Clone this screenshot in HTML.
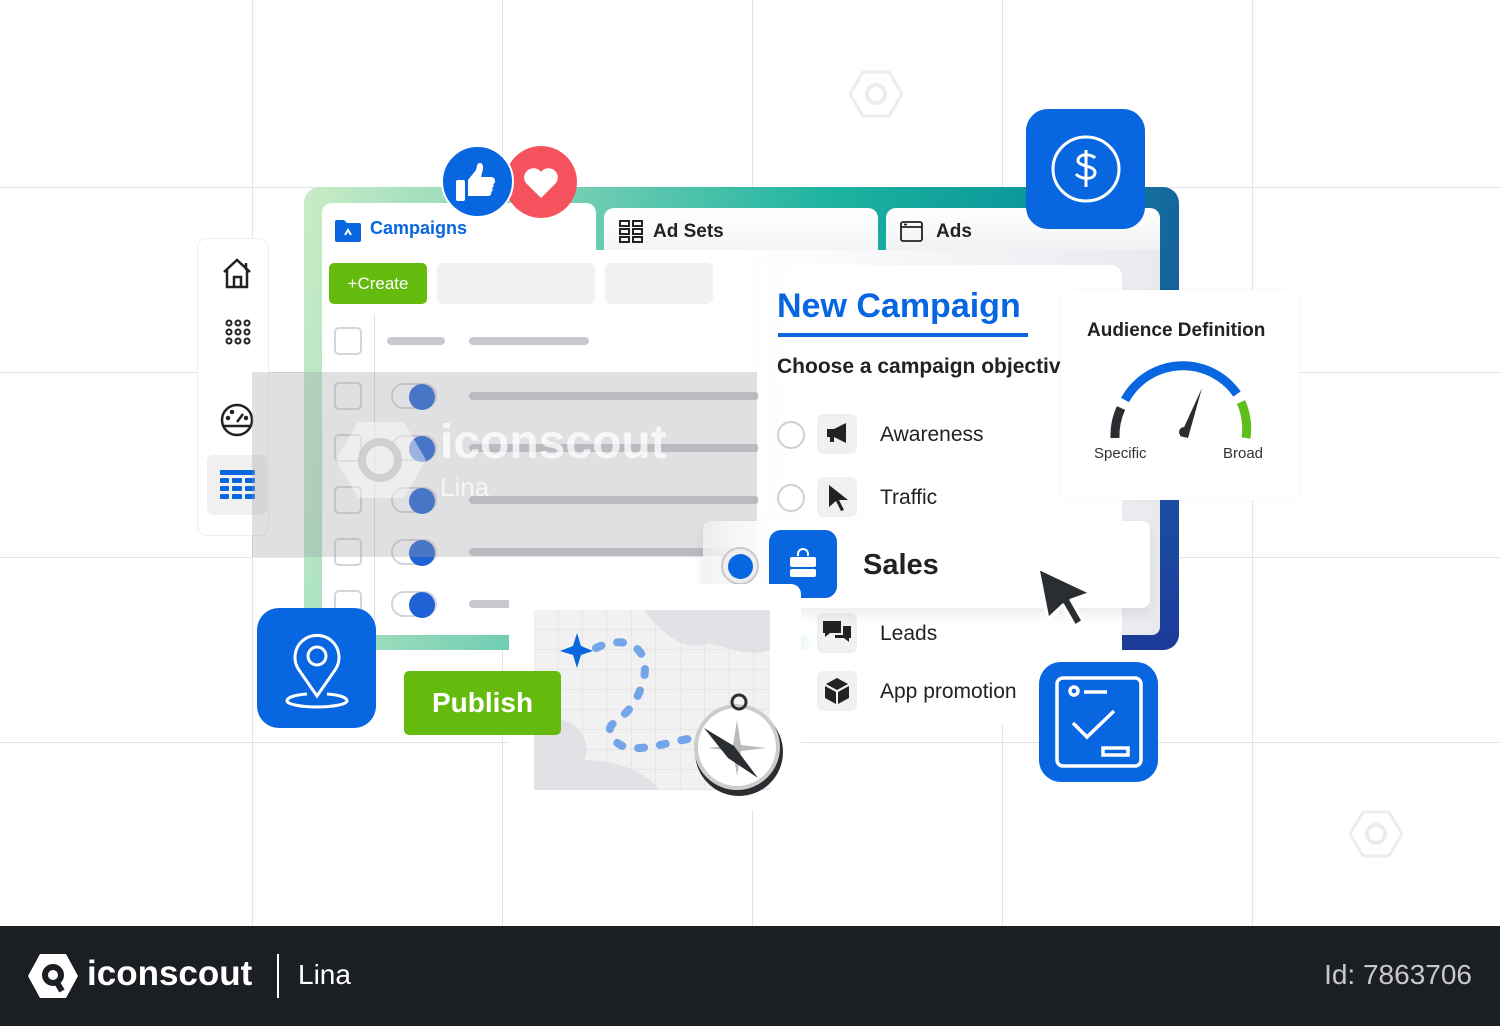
<!DOCTYPE html>
<html><head><meta charset="utf-8"><style>
*{margin:0;padding:0;box-sizing:border-box}
body{width:1500px;height:1026px;position:relative;overflow:hidden;background:#fff;font-family:"Liberation Sans",sans-serif}
.a{position:absolute}
.vl{position:absolute;top:0;width:1px;height:926px;background:#e3e3ea}
.hl{position:absolute;left:0;height:1px;width:1500px;background:#e3e3ea}
.cb{position:absolute;left:334px;width:28px;height:28px;border:2px solid #d4d4d9;border-radius:5px;background:#fff}
.tg{position:absolute;left:391px;width:46px;height:26px;border:2px solid #d4d4d9;border-radius:13px;background:#fff}
.tg:after{content:"";position:absolute;right:0;top:-1px;width:26px;height:26px;border-radius:50%;background:#1f62d6}
.bar{position:absolute;height:8px;border-radius:4px;background:#c8c9cf}
.rad{position:absolute;left:777px;width:28px;height:28px;border:2px solid #d0d0d4;border-radius:50%;background:#fff}
.ib{position:absolute;left:817px;width:40px;height:40px;border-radius:6px;background:#f0f0f2}
.lbl{position:absolute;left:880px;font-size:21px;color:#222}
.big{position:absolute;background:#0866e0;border-radius:22px}
</style></head><body>
<div class="vl" style="left:252px"></div><div class="vl" style="left:502px"></div><div class="vl" style="left:752px"></div><div class="vl" style="left:1002px"></div><div class="vl" style="left:1252px"></div>
<div class="hl" style="top:187px"></div><div class="hl" style="top:372px"></div><div class="hl" style="top:557px"></div><div class="hl" style="top:742px"></div>

<!-- sidebar -->
<div class="a" style="left:197px;top:238px;width:72px;height:298px;background:#fff;border:1px solid #eee;border-radius:10px"></div>
<svg class="a" style="left:220px;top:255px" width="36" height="36" viewBox="0 0 36 36" fill="none" stroke="#222" stroke-width="2.5"><path d="M4 17L17 5l13 12M7 14v18h20V14M14 32V22h7v10M26 8v7"/></svg>
<svg class="a" style="left:224px;top:318px" width="28" height="28" viewBox="0 0 28 28" fill="none" stroke="#222" stroke-width="2"><circle cx="5" cy="5" r="2.5"/><circle cx="14" cy="5" r="2.5"/><circle cx="23" cy="5" r="2.5"/><circle cx="5" cy="14" r="2.5"/><circle cx="14" cy="14" r="2.5"/><circle cx="23" cy="14" r="2.5"/><circle cx="5" cy="23" r="2.5"/><circle cx="14" cy="23" r="2.5"/><circle cx="23" cy="23" r="2.5"/></svg>
<svg class="a" style="left:219px;top:402px" width="36" height="36" viewBox="0 0 36 36" fill="none" stroke="#222" stroke-width="2.5"><circle cx="18" cy="18" r="15"/><path d="M5 24h26M18 20l6-8"/><circle cx="9" cy="16" r="1" fill="#222"/><circle cx="13" cy="10" r="1" fill="#222"/><circle cx="27" cy="16" r="1" fill="#222"/></svg>
<div class="a" style="left:207px;top:455px;width:60px;height:60px;background:#f0f0f0;border-radius:6px"></div>
<svg class="a" style="left:220px;top:470px" width="35" height="30" viewBox="0 0 35 30" fill="#0866e0"><rect x="0" y="0" width="35" height="5" rx="1"/><rect x="0" y="8" width="9" height="5" rx="1"/><rect x="12" y="8" width="10" height="5" rx="1"/><rect x="25" y="8" width="10" height="5" rx="1"/><rect x="0" y="16" width="9" height="5" rx="1"/><rect x="12" y="16" width="10" height="5" rx="1"/><rect x="25" y="16" width="10" height="5" rx="1"/><rect x="0" y="24" width="9" height="5" rx="1"/><rect x="12" y="24" width="10" height="5" rx="1"/><rect x="25" y="24" width="10" height="5" rx="1"/></svg>

<!-- frame -->
<div class="a" style="left:304px;top:187px;width:875px;height:463px;border-radius:16px;background:linear-gradient(100deg,#c9ecc6 0%,#80d2b6 25%,#1db3a0 55%,#0b9a9a 75%,#1a4aa0 100%)"></div>
<div class="a" style="left:1100px;top:400px;width:79px;height:250px;border-radius:0 0 16px 0;background:linear-gradient(#1a5aa8,#1c3b99)"></div>
<div class="a" style="left:322px;top:250px;width:838px;height:385px;background:linear-gradient(90deg,#fff 0%,#fff 50%,#e8eaee 100%);border-radius:0 0 8px 8px"></div>
<div class="a" style="left:322px;top:203px;width:274px;height:60px;background:#fff;border-radius:10px 10px 0 0"></div>
<div class="a" style="left:604px;top:208px;width:274px;height:42px;background:linear-gradient(#fff,#f4f5f7);border-radius:10px 10px 0 0"></div>
<div class="a" style="left:886px;top:208px;width:274px;height:42px;background:linear-gradient(#fff,#f0f1f3);border-radius:10px 10px 0 0"></div>
<svg class="a" style="left:334px;top:218px" width="28" height="24" viewBox="0 0 28 24"><path d="M1 4a2 2 0 012-2h7l3 3h12a2 2 0 012 2v15a2 2 0 01-2 2H3a2 2 0 01-2-2z" fill="#0866e0"/><path d="M11 17l3-5 3 5" stroke="#fff" stroke-width="2" fill="none"/></svg>
<div class="a" style="left:370px;top:218px;font-size:18px;font-weight:bold;color:#0866e0">Campaigns</div>
<svg class="a" style="left:619px;top:220px" width="24" height="24" viewBox="0 0 24 24" fill="none" stroke="#222" stroke-width="2"><rect x="1" y="1" width="9" height="5"/><rect x="14" y="1" width="9" height="5"/><rect x="1" y="9" width="9" height="5"/><rect x="14" y="9" width="9" height="5"/><rect x="1" y="17" width="9" height="5"/><rect x="14" y="17" width="9" height="5"/></svg>
<div class="a" style="left:653px;top:221px;font-size:19px;font-weight:bold;color:#222">Ad Sets</div>
<svg class="a" style="left:900px;top:221px" width="23" height="21" viewBox="0 0 23 21" fill="none" stroke="#222" stroke-width="1.8"><rect x="1" y="1" width="21" height="19" rx="2"/><path d="M1 6h21M4 3.5h3"/></svg>
<div class="a" style="left:936px;top:221px;font-size:19px;font-weight:bold;color:#222">Ads</div>

<div class="a" style="left:329px;top:263px;width:98px;height:41px;background:#64bb0e;border-radius:5px;color:#fff;font-size:17px;text-align:center;line-height:41px">+Create</div>
<div class="a" style="left:437px;top:263px;width:158px;height:41px;background:#f1f1f2;border-radius:6px"></div>
<div class="a" style="left:605px;top:263px;width:108px;height:41px;background:#f1f1f2;border-radius:6px"></div>
<div class="a" style="left:374px;top:315px;width:1px;height:320px;background:#ddd"></div>
<div class="cb" style="top:327px"></div><div class="bar" style="left:387px;top:337px;width:58px"></div><div class="bar" style="left:469px;top:337px;width:120px"></div>
<div class="cb" style="top:382px"></div><div class="tg" style="top:383px"></div><div class="bar" style="left:469px;top:392px;width:290px"></div>
<div class="cb" style="top:434px"></div><div class="tg" style="top:435px"></div><div class="bar" style="left:469px;top:444px;width:290px"></div>
<div class="cb" style="top:486px"></div><div class="tg" style="top:487px"></div><div class="bar" style="left:469px;top:496px;width:290px"></div>
<div class="cb" style="top:538px"></div><div class="tg" style="top:539px"></div><div class="bar" style="left:469px;top:548px;width:290px"></div>
<div class="cb" style="top:590px"></div><div class="tg" style="top:591px"></div><div class="bar" style="left:469px;top:600px;width:60px"></div>

<!-- watermark overlay -->
<div class="a" style="left:252px;top:372px;width:505px;height:185px;background:rgba(160,160,165,0.32)"></div>
<div class="a" style="left:440px;top:415px;font-size:48px;color:rgba(255,255,255,0.75);font-weight:bold">iconscout</div>
<div class="a" style="left:440px;top:472px;font-size:26px;color:rgba(255,255,255,0.7)">Lina</div>
<svg class="a" style="left:336px;top:420px" width="90" height="80" viewBox="0 0 90 80"><path d="M22 2h46l22 38-22 38H22L0 40z" fill="rgba(255,255,255,0.45)"/><circle cx="44" cy="40" r="18" fill="none" stroke="rgba(200,200,200,0.8)" stroke-width="8"/></svg>

<!-- New campaign card -->
<div class="a" style="left:758px;top:265px;width:364px;height:460px;background:linear-gradient(90deg,rgba(255,255,255,0.6),#fff 15%);border-radius:12px"></div>
<div class="a" style="left:777px;top:287px;font-size:34px;font-weight:bold;color:#0866e0">New Campaign</div>
<div class="a" style="left:778px;top:333px;width:250px;height:4px;background:#0866e0"></div>
<div class="a" style="left:777px;top:355px;font-size:21px;font-weight:bold;color:#222;width:285px;overflow:hidden;white-space:nowrap">Choose a campaign objective</div>
<div class="rad" style="top:421px"></div><div class="ib" style="top:414px"></div>
<svg class="a" style="left:825px;top:422px" width="26" height="24" viewBox="0 0 26 24" fill="#222"><path d="M2 7h7l12-6v20l-12-6H2z"/><rect x="5" y="15" width="4" height="5"/></svg>
<div class="lbl" style="top:423px">Awareness</div>
<div class="rad" style="top:484px"></div><div class="ib" style="top:477px"></div>
<svg class="a" style="left:828px;top:484px" width="22" height="28" viewBox="0 0 22 28" fill="#222"><path d="M1 1l19 15h-9l5 10-3 1-5-10-7 6z"/></svg>
<div class="lbl" style="top:486px">Traffic</div>
<div class="ib" style="top:613px"></div>
<svg class="a" style="left:822px;top:619px" width="30" height="28" viewBox="0 0 30 28" fill="#222"><path d="M1 2h18v12H8l-5 4v-4H1z"/><path d="M21 7h8v12h-2v4l-5-4h-9v-3h8z"/></svg>
<div class="lbl" style="top:622px">Leads</div>
<div class="ib" style="top:671px"></div>
<svg class="a" style="left:824px;top:677px" width="26" height="28" viewBox="0 0 26 28" fill="#222"><path d="M13 1l11 6-11 6L2 7z"/><path d="M1 9l11 6v12L1 21z"/><path d="M25 9l-11 6v12l11-6z"/></svg>
<div class="lbl" style="top:680px">App promotion</div>

<!-- audience -->
<div class="a" style="left:1061px;top:290px;width:238px;height:210px;background:#fff;border-radius:10px;box-shadow:0 0 6px rgba(0,0,0,0.04)"></div>
<div class="a" style="left:1087px;top:320px;font-size:19px;font-weight:bold;color:#222">Audience Definition</div>
<svg class="a" style="left:1100px;top:360px" width="160" height="82" viewBox="0 0 160 82" fill="none" stroke-width="9"><path d="M15 78a66 66 0 0 1 6-30" stroke="#2a2d31"/><path d="M25 40a66 66 0 0 1 112 -6" stroke="#0866e0"/><path d="M141 42a66 66 0 0 1 5 36" stroke="#5fbf1a"/><path d="M80 76l22-48-14 50z" fill="#2a2d31" stroke="none"/><circle cx="84" cy="72" r="5" fill="#2a2d31" stroke="none"/></svg>
<div class="a" style="left:1094px;top:445px;font-size:15px;color:#333">Specific</div>
<div class="a" style="left:1223px;top:445px;font-size:15px;color:#333">Broad</div>

<!-- sales -->
<div class="a" style="left:703px;top:521px;width:447px;height:87px;background:linear-gradient(90deg,rgba(240,240,242,0.8),#fff 15%);border-radius:8px;box-shadow:0 6px 14px rgba(0,0,0,0.08)"></div>
<div class="a" style="left:721px;top:547px;width:38px;height:38px;border-radius:50%;border:2px solid #c9c9cc;background:#eee"></div>
<div class="a" style="left:728px;top:554px;width:25px;height:25px;border-radius:50%;background:#0866e0"></div>
<div class="a" style="left:769px;top:530px;width:68px;height:68px;border-radius:12px;background:#0866e0"></div>
<svg class="a" style="left:788px;top:548px" width="30" height="30" viewBox="0 0 30 30" fill="#fff"><path d="M9 8V6a6 6 0 0 1 12 0v2h-2V6a4 4 0 0 0-8 0v2z"/><rect x="2" y="9" width="26" height="10" rx="2"/><rect x="2" y="21" width="26" height="8" rx="2"/></svg>
<div class="a" style="left:863px;top:549px;font-size:29px;font-weight:bold;color:#222">Sales</div>
<svg class="a" style="left:1032px;top:562px" width="68" height="68" viewBox="0 0 68 68"><path d="M6 6l53 25-20 7 12 21-8 5-12-21-15 14z" fill="#2a2d31" stroke="#fff" stroke-width="3" stroke-linejoin="round"/></svg>

<!-- map card -->
<div class="a" style="left:509px;top:584px;width:292px;height:226px;background:#fff;border-radius:10px"></div>
<svg class="a" style="left:534px;top:610px" width="250" height="188" viewBox="0 0 250 188">
<defs><pattern id="g" width="24.4" height="20" patternUnits="userSpaceOnUse"><path d="M24.4 0V20H0" fill="none" stroke="#dcdce0" stroke-width="1"/></pattern></defs>
<rect x="0" y="0" width="236" height="180" fill="#f1f1f2"/>
<path d="M110 0h126v40c-30 10-50-10-70-5s-40-15-56-35z" fill="#e2e2e6"/>
<path d="M0 110c40-10 60 20 50 40 30 0 60 10 75 30H0z" fill="#e2e2e6"/>
<rect x="0" y="0" width="236" height="180" fill="url(#g)"/>
<path d="M43 23l4 13 12 5-12 4-4 13-4-13-13-4 13-5z" fill="#0866e0"/>
<path d="M62 38c30-15 60 0 45 40s-40 30-28 50 50 5 80 0" fill="none" stroke="#74a5ea" stroke-width="8" stroke-linecap="round" stroke-dasharray="6 16"/>
<circle cx="205" cy="142" r="44" fill="#2a2d31"/>
<circle cx="203" cy="137" r="41" fill="#fff" stroke="#ccc" stroke-width="4"/>
<circle cx="205" cy="92" r="7" fill="none" stroke="#2a2d31" stroke-width="3"/>
<path d="M203 110l4 25 25 3-25 3-4 25-4-25-25-3 25-3z" fill="#bbb"/>
<path d="M170 118l30 18 24 32-30-20z" fill="#2a2d31"/>
</svg>

<!-- publish -->
<div class="a" style="left:404px;top:671px;width:157px;height:64px;background:#64bb0e;border-radius:5px;color:#fff;font-size:28px;font-weight:bold;text-align:center;line-height:64px">Publish</div>

<!-- big icons -->
<div class="big" style="left:257px;top:608px;width:119px;height:120px"></div>
<svg class="a" style="left:285px;top:628px" width="64" height="82" viewBox="0 0 64 82" fill="none" stroke="#fff" stroke-width="3"><path d="M32 68L14 42a22 22 0 1 1 36 0z"/><circle cx="32" cy="28" r="9"/><path d="M22 66C8 67 2 70 2 73c0 3 13 6 30 6s30-3 30-6c0-3-6-6-20-7"/></svg>
<div class="big" style="left:1026px;top:109px;width:119px;height:120px"></div>
<svg class="a" style="left:1050px;top:133px" width="72" height="72" viewBox="0 0 72 72" fill="none" stroke="#fff" stroke-width="3"><ellipse cx="36" cy="36" rx="33" ry="32"/><path d="M45 25c-3-4-16-5-17 2s18 5 17 13-15 6-19 1M36 17v37"/></svg>
<div class="big" style="left:1039px;top:662px;width:119px;height:120px"></div>
<svg class="a" style="left:1055px;top:676px" width="88" height="92" viewBox="0 0 88 92" fill="none" stroke="#fff" stroke-width="3.5"><rect x="2" y="2" width="84" height="88" rx="6"/><circle cx="19" cy="15" r="4"/><path d="M29 16h23M18 47l14 14 27-26"/><rect x="48" y="72" width="25" height="7"/></svg>

<!-- like heart -->
<div class="a" style="left:505px;top:146px;width:72px;height:72px;border-radius:50%;background:#f5525e"></div>
<svg class="a" style="left:523px;top:167px" width="36" height="32" viewBox="0 0 36 32"><path d="M18 31L3 16A9 9 0 0 1 18 5a9 9 0 0 1 15 11z" fill="#fff"/></svg>
<div class="a" style="left:441px;top:145px;width:73px;height:73px;border-radius:50%;background:#0866e0;border:2px solid #fff"></div>
<svg class="a" style="left:455px;top:163px" width="42" height="40" viewBox="0 0 42 40" fill="#fff"><rect x="1" y="17" width="9" height="21" rx="2"/><path d="M13 17l8-10c1-4 1-7 4-7s4 4 2 10l-1 4h10c3 0 4 2 4 4 0 2-1 3-2 3 1 1 1 3-1 4 1 1 1 3-1 4 1 1 0 4-3 4H13z"/></svg>

<!-- small watermark hexes -->
<svg class="a" style="left:849px;top:70px" width="54" height="48" viewBox="0 0 54 48"><path d="M14 2h26l13 22-13 22H14L1 24z" fill="none" stroke="#ececee" stroke-width="3"/><circle cx="27" cy="24" r="9" fill="none" stroke="#ececee" stroke-width="4"/></svg>
<svg class="a" style="left:1349px;top:810px" width="54" height="48" viewBox="0 0 54 48"><path d="M14 2h26l13 22-13 22H14L1 24z" fill="none" stroke="#ececee" stroke-width="3"/><circle cx="27" cy="24" r="9" fill="none" stroke="#ececee" stroke-width="4"/></svg>

<!-- footer -->
<div class="a" style="left:0;top:926px;width:1500px;height:100px;background:#1b1e23"></div>
<svg class="a" style="left:28px;top:953px" width="50" height="46" viewBox="0 0 50 46"><path d="M12 1h26l12 22-12 22H12L0 23z" fill="#fff"/><circle cx="25" cy="22" r="8" fill="none" stroke="#1b1e23" stroke-width="6"/><path d="M28 28l6 10" stroke="#1b1e23" stroke-width="6"/></svg>
<div class="a" style="left:87px;top:954px;font-size:35px;font-weight:bold;color:#fff">iconscout</div>
<div class="a" style="left:277px;top:954px;width:2px;height:44px;background:#fff"></div>
<div class="a" style="left:298px;top:959px;font-size:28px;color:#fff">Lina</div>
<div class="a" style="right:28px;top:959px;font-size:28px;color:#c8c8cc">Id: 7863706</div>
</body></html>
